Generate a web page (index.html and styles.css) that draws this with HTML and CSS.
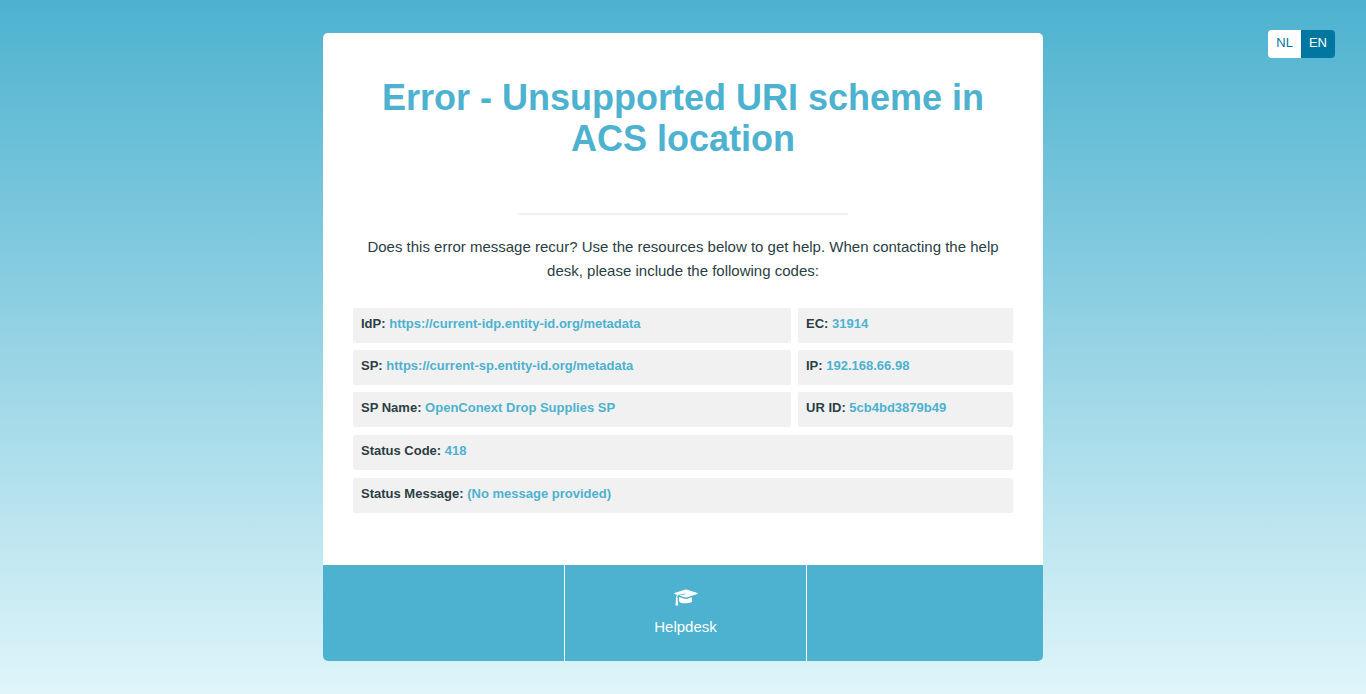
FILE: index.html
```html
<!DOCTYPE html>
<html lang="en">
<head>
<meta charset="utf-8">
<meta name="viewport" content="width=device-width, initial-scale=1">
<title>Error - Unsupported URI scheme in ACS location</title>
<link rel="stylesheet" href="styles.css">
</head>
<body>
<nav class="languages" aria-label="Language">
<a class="language" href="?lang=nl">NL</a>
<a class="language language-active" href="?lang=en" aria-current="true">EN</a>
</nav>
<main class="card">
<section class="content">
<h1 class="title">Error - Unsupported URI scheme in ACS location</h1>
<hr class="divider">
<p class="intro">Does this error message recur? Use the resources below to get help. When contacting the help desk, please include the following codes:</p>
<dl class="codes">
<div class="code"><dt>IdP:</dt> <dd>https://current-idp.entity-id.org/metadata</dd></div>
<div class="code"><dt>EC:</dt> <dd>31914</dd></div>
<div class="code"><dt>SP:</dt> <dd>https://current-sp.entity-id.org/metadata</dd></div>
<div class="code"><dt>IP:</dt> <dd>192.168.66.98</dd></div>
<div class="code"><dt>SP Name:</dt> <dd>OpenConext Drop Supplies SP</dd></div>
<div class="code"><dt>UR ID:</dt> <dd>5cb4bd3879b49</dd></div>
<div class="code code-wide"><dt>Status Code:</dt> <dd>418</dd></div>
<div class="code code-wide"><dt>Status Message:</dt> <dd>(No message provided)</dd></div>
</dl>
</section>
<footer class="footer">
<div class="footer-cell"></div>
<a class="footer-cell" href="#helpdesk">
<svg class="cap" viewBox="0 0 26 18" aria-hidden="true"><path d="M12.500 .5Q13 .3 13.500 .5L24.500 4Q25.500 4.500 24.500 5L13.500 8.500Q13 8.700 12.500 8.500L6 6.500 12.500 5.200 12.300 4.500 5 6Q4.300 7 4.200 8.500Q5.200 9.300 4.600 10.500L5.200 16Q5.200 16.600 4.600 16.600H3Q2.400 16.600 2.500 16L3 10.500Q2.400 9.300 3.300 8.500Q3.400 7 4 5.800L1.500 5Q.5 4.500 1.500 4Z"/><path d="M6.200 8 12.200 9.900Q13 10.100 13.800 9.900L18.800 8.300 19.200 12Q19.200 14 13 14.300T6 12Z"/></svg>
<span>Helpdesk</span>
</a>
<div class="footer-cell"></div>
</footer>
</main>
</body>
</html>
```
FILE: styles.css
```css
* { box-sizing: border-box; }
html { min-height: 100%; }
body {
  margin: 0;
  min-height: 100vh;
  padding: 33px 16px;
  background: linear-gradient(#4db2cf, #dff5fa);
  color: #2b3e44;
  font-family: "Nimbus Sans", "Nimbus Sans L", Helvetica, "Liberation Sans", Arial, sans-serif;
  font-size: 15px;
  line-height: 24px;
}
.languages {
  position: absolute;
  top: 30px;
  right: 31px;
  display: flex;
  border-radius: 4px;
  overflow: hidden;
}
.language {
  padding: 1px 8px 3px;
  background: #fff;
  color: #0077a0;
  font-size: 13px;
  text-decoration: none;
}
.language-active { background: #0077a0; color: #fff; }
.card {
  max-width: 720px;
  margin: 0 auto;
  background: #fff;
  border-radius: 5px;
  overflow: hidden;
}
.content { padding: 44px 30px 52px; text-align: center; }
.title {
  margin: 0 0 54px;
  color: #4db2cf;
  font-size: 36px;
  line-height: 41px;
}
.divider { width: 50%; margin: 0 auto 20px; border: 0; border-top: 2px solid #f1f1f1; }
.intro { margin: 0 0 25px; }
.codes {
  display: grid;
  grid-template-columns: 438fr 215fr;
  gap: 7px;
  margin: 0;
  text-align: left;
}
.code {
  padding: 4px 8px 7px;
  background: #f1f1f1;
  border-radius: 2px;
  font-size: 13px;
  font-weight: bold;
}
.code-wide { grid-column: 1 / -1; margin-top: 1px; }
.code dt, .code dd { display: inline; margin: 0; }
.code dd { color: #4db2cf; }
.footer { display: grid; grid-template-columns: 242fr 242fr 236fr; background: #4db2cf; }
.footer-cell {
  display: flex;
  flex-direction: column;
  align-items: center;
  min-height: 96px;
  padding: 24px 8px 16px;
  color: #fff;
  text-decoration: none;
}
.footer-cell:not(:last-child) { border-right: 1px solid #fff; }
.cap { width: 26px; height: 18px; margin-bottom: 8px; fill: currentColor; }
```
